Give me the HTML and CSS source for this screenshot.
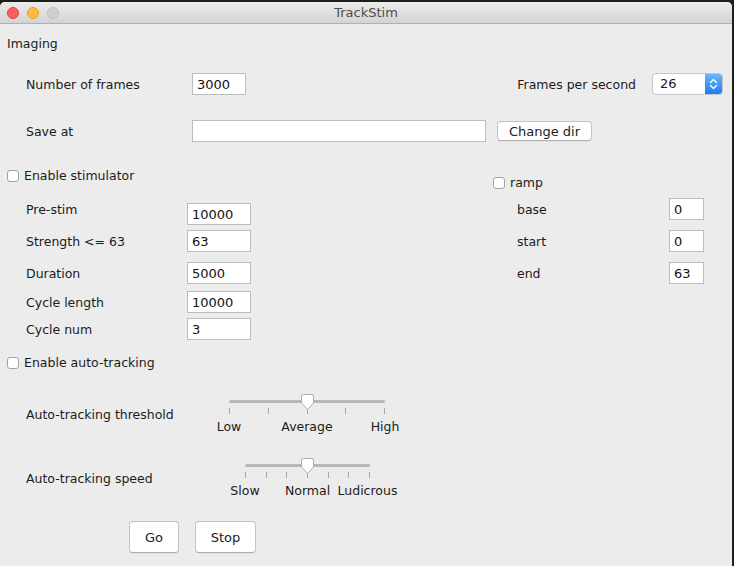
FILE: index.html
```html
<!DOCTYPE html>
<html>
<head>
<meta charset="utf-8">
<title>TrackStim</title>
<link rel="stylesheet" href="styles.css">
</head>
<body>
<div class="window">
  <div class="titlebar">
    <div class="lights">
      <span class="light red"></span>
      <span class="light yellow"></span>
      <span class="light gray"></span>
    </div>
    <div class="title">TrackStim</div>
    <div></div>
  </div>
  <div class="content">
    <div class="heading">Imaging</div>

    <div class="row row-frames">
      <span class="label w-main">Number of frames</span>
      <span class="input w-frames">3000</span>
      <span class="spacer"></span>
      <span class="label fps-label">Frames per second</span>
      <span class="select">
        <span class="select-value">26</span>
        <span class="stepper">
          <svg width="9" height="14" viewBox="0 0 9 14"><path d="M1.5 5.5 L4.5 2.5 L7.5 5.5 M1.5 8.5 L4.5 11.5 L7.5 8.5" fill="none" stroke="#fff" stroke-width="1.4" stroke-linecap="round" stroke-linejoin="round"/></svg>
        </span>
      </span>
    </div>

    <div class="row row-save">
      <span class="label w-main">Save at</span>
      <span class="input w-path"></span>
      <span class="button small">Change dir</span>
    </div>

    <div class="stim">
      <div class="stim-left">
        <label class="check"><span class="box"></span>Enable stimulator</label>
        <div class="row field r-prestim">
          <span class="label w-stim up">Pre-stim</span>
          <span class="input w-stimin">10000</span>
        </div>
        <div class="row field r-strength">
          <span class="label w-stim">Strength &lt;= 63</span>
          <span class="input w-stimin">63</span>
        </div>
        <div class="row field r-duration">
          <span class="label w-stim">Duration</span>
          <span class="input w-stimin">5000</span>
        </div>
        <div class="row field r-cyclelen">
          <span class="label w-stim">Cycle length</span>
          <span class="input w-stimin">10000</span>
        </div>
        <div class="row field r-cyclenum">
          <span class="label w-stim">Cycle num</span>
          <span class="input w-stimin">3</span>
        </div>
      </div>
      <div class="stim-right">
        <label class="check ramp"><span class="box"></span>ramp</label>
        <div class="row rfield r-base">
          <span class="label w-ramp">base</span>
          <span class="input w-rampin">0</span>
        </div>
        <div class="row rfield r-next">
          <span class="label w-ramp">start</span>
          <span class="input w-rampin">0</span>
        </div>
        <div class="row rfield r-next">
          <span class="label w-ramp">end</span>
          <span class="input w-rampin">63</span>
        </div>
      </div>
    </div>

    <label class="check auto"><span class="box"></span>Enable auto-tracking</label>

    <div class="row slider-row s-threshold">
      <span class="label w-thr">Auto-tracking threshold</span>
      <div class="slider w-sl1">
        <div class="track-area">
          <svg class="thumb" width="15" height="17" viewBox="0 0 15 17"><path d="M1.5 2.5 Q1.5 0.5 3.5 0.5 H11.5 Q13.5 0.5 13.5 2.5 V9 L7.5 15.5 L1.5 9 Z" fill="#fff" stroke="#a9a9a9"/></svg>
        </div>
        <div class="ticks"><i></i><i></i><i></i><i></i><i></i></div>
        <div class="marks">
          <span style="left:0%">Low</span>
          <span style="left:50%">Average</span>
          <span style="left:100%">High</span>
        </div>
      </div>
    </div>

    <div class="row slider-row s-speed">
      <span class="label w-spd">Auto-tracking speed</span>
      <div class="slider w-sl2">
        <div class="track-area">
          <svg class="thumb" width="15" height="17" viewBox="0 0 15 17"><path d="M1.5 2.5 Q1.5 0.5 3.5 0.5 H11.5 Q13.5 0.5 13.5 2.5 V9 L7.5 15.5 L1.5 9 Z" fill="#fff" stroke="#a9a9a9"/></svg>
        </div>
        <div class="ticks"><i></i><i></i><i></i><i></i><i></i><i></i><i></i></div>
        <div class="marks">
          <span style="left:0%">Slow</span>
          <span style="left:50%">Normal</span>
          <span style="left:98%">Ludicrous</span>
        </div>
      </div>
    </div>

    <div class="actions">
      <span class="button big go">Go</span>
      <span class="button big stop">Stop</span>
    </div>
  </div>
</div>
</body>
</html>
```
FILE: styles.css
```css
* { box-sizing: border-box; }
html, body { margin: 0; padding: 0; }
body {
  width: 734px;
  height: 566px;
  overflow: hidden;
  background: #1d1f1c;
  font-family: "DejaVu Sans", "Liberation Sans", sans-serif;
  font-size: 12.5px;
  color: #1b1b1b;
}
.window {
  margin-top: 2px;
  width: 732px;
  height: 564px;
  background: #ececec;
  border-radius: 5px 5px 0 0;
  overflow: hidden;
}
.titlebar {
  height: 22px;
  display: grid;
  grid-template-columns: 1fr auto 1fr;
  align-items: center;
  background: linear-gradient(#ebebeb, #d3d3d3);
  border-bottom: 1px solid #b0b0b0;
}
.lights { display: flex; gap: 8px; padding-left: 7px; }
.light { width: 12px; height: 12px; border-radius: 50%; }
.red { background: #fc605c; border: 1px solid #e0443e; }
.yellow { background: #fdbc40; border: 1px solid #dea123; }
.gray { background: #cfcfcf; border: 1px solid #bdbdbd; }
.title { font-size: 13px; color: #4d4d4d; }

.content { position: relative; }
.heading { margin-top: 12px; padding-left: 7px; line-height: 16px; }

.row { display: flex; align-items: center; height: 22px; }
.label { line-height: 16px; padding-top: 2px; white-space: nowrap; flex: none; }
.spacer { flex: 1; }
.input {
  flex: none;
  height: 22px;
  background: #fff;
  border: 1px solid #bcbcbc;
  padding-left: 4px;
  padding-top: 1px;
  line-height: 20px;
  font-size: 13px;
  color: #111;
}

.row-frames { margin-top: 21px; padding-left: 26px; padding-right: 9px; }
.w-main { width: 166px; }
.w-frames { width: 54px; }
.fps-label { margin-right: 16px; }
.select {
  display: flex;
  width: 71px;
  height: 22px;
  background: #fff;
  border: 1px solid #c6c6c6;
  border-radius: 4px;
  overflow: hidden;
}
.select-value { flex: 1; padding-left: 7px; line-height: 19px; font-size: 13px; }
.stepper {
  width: 17px;
  display: flex;
  align-items: center;
  justify-content: center;
  background: linear-gradient(#6cb4fa, #1b7ef5);
}

.row-save { margin-top: 25px; padding-left: 26px; }
.w-path { width: 294px; }
.button {
  flex: none;
  display: inline-flex;
  align-items: center;
  justify-content: center;
  background: #fff;
  border: 1px solid #c3c3c3;
  border-bottom-color: #adadad;
  border-radius: 4px;
  box-shadow: 0 1px 0 rgba(0,0,0,0.04);
  font-size: 13px;
  padding-top: 1px;
}
.small { margin-left: 11px; width: 95px; height: 20px; }

.stim { display: grid; grid-template-columns: 493px 1fr; margin-top: 26px; align-items: start; }
.stim-left { padding-left: 7px; }
.check { display: flex; align-items: center; height: 14px; line-height: 14px; }
.check .box { margin-top: -1px; }
.check { padding-top: 1px; height: 15px; }
.box {
  width: 12px;
  height: 12px;
  background: #fff;
  border: 1px solid #a3a3a3;
  border-radius: 3px;
  margin-right: 5px;
  flex: none;
}
.field { padding-left: 19px; }
.w-stim { width: 161px; }
.w-stimin { width: 64px; }
.up { align-self: flex-start; margin-top: -3px; }
.r-prestim { margin-top: 20px; }
.r-strength { margin-top: 5px; }
.r-duration { margin-top: 10px; }
.r-cyclelen { margin-top: 7px; }
.r-cyclenum { margin-top: 5px; }

.ramp { margin-top: 7px; }
.rfield { padding-left: 24px; }
.w-ramp { width: 152px; }
.w-rampin { width: 35px; }
.r-base { margin-top: 8px; }
.r-next { margin-top: 10px; }

.auto { margin-top: 15px; padding-left: 7px; }

.slider-row { height: 40px; padding-left: 26px; }
.s-threshold { margin-top: 24px; }
.s-speed { margin-top: 24px; }
.w-thr { width: 203px; }
.w-spd { width: 219px; }
.slider { position: relative; flex: none; height: 40px; }
.w-sl1 { width: 156px; }
.w-sl2 { width: 125px; }
.track-area { position: relative; height: 17px; }
.track-area::before {
  content: "";
  position: absolute;
  left: 0; right: 0; top: 6px;
  height: 3px;
  border-radius: 2px;
  background: #b8b8b8;
}
.thumb { position: absolute; left: 50%; top: 0; margin-left: -7.5px; }
.ticks { display: flex; justify-content: space-between; height: 6px; margin-top: -3px; }
.ticks i { width: 1px; height: 6px; background: #a5a5a5; }
.marks { position: relative; height: 14px; margin-top: 5px; }
.marks span {
  position: absolute;
  top: 0;
  padding-top: 1px;
  transform: translateX(-50%);
  line-height: 14px;
  white-space: nowrap;
}

.actions { display: flex; gap: 16px; padding-left: 129px; margin-top: 23px; }
.big { height: 32px; }
.go { width: 50px; }
.stop { width: 61px; }
```
